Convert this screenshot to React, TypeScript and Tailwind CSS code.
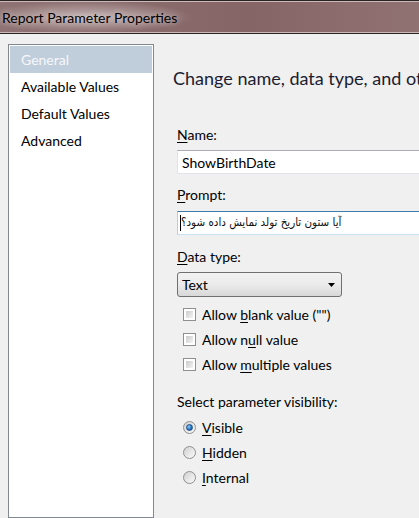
import React from "react";

const font = "font-['Lato',_'Noto_Sans',_sans-serif]";

// label with one underlined access key
function Accel({ pre = "", k, post }: { pre?: string; k: string; post: string }) {
  return (
    <span>
      {pre}
      <span className="underline underline-offset-2">{k}</span>
      {post}
    </span>
  );
}

function Checkbox({ children }: { children: React.ReactNode }) {
  return (
    <div className="flex h-[25px] items-center">
      <div className="ml-[6px] h-[13px] w-[13px] border border-[#8e8f8f] bg-white p-[2px]">
        <div className="h-full w-full bg-gradient-to-br from-[#cbcbcb] to-[#f4f4f4]" />
      </div>
      <span className="ml-[6px]">{children}</span>
    </div>
  );
}

function Radio({ checked, children }: { checked?: boolean; children: React.ReactNode }) {
  return (
    <div className="flex h-[25px] items-center">
      <div className="ml-[6px] flex h-[13px] w-[13px] items-center justify-center rounded-full border border-[#8e8f8f] bg-gradient-to-br from-[#d0d0d0] to-[#fbfbfb]">
        {checked && (
          <div className="h-[7px] w-[7px] rounded-full border border-[#1c4f87] bg-[radial-gradient(circle_at_35%_35%,#8fd0ff,#1f6fc0_60%,#0d4a8a)]" />
        )}
      </div>
      <span className="ml-[6px]">{children}</span>
    </div>
  );
}

export default function App() {
  return (
    <div className={`flex h-[518px] w-[419px] flex-col overflow-hidden bg-[#f0f0f0] text-[14px] text-black ${font}`}>
      {/* title bar */}
      <div className="h-[34px] shrink-0 border-y border-[#2b2222] bg-[#2b2222]">
        <div className="flex h-full items-center border-y border-[#c9b9b9] bg-[radial-gradient(ellipse_105px_16px_at_88px_50%,rgba(205,190,190,0.85),rgba(205,190,190,0)),linear-gradient(to_right,#8f7374,#866566_60%,#917273)] pl-[2px]">
          <span className="text-[14px] [text-shadow:0_0_6px_rgba(255,255,255,0.7)]">
            Report Parameter Properties
          </span>
        </div>
      </div>

      <div className="flex min-h-0 flex-1">
        {/* left page list */}
        <div className="ml-[8px] mt-[10px] w-[146px] shrink-0 border border-[#828790] bg-white p-[1px]">
          <div className="flex h-[27px] items-center bg-[#c0cddb] pl-[11px] text-[#f6f8fb]">General</div>
          <div className="flex h-[27px] items-center pl-[11px]">Available Values</div>
          <div className="flex h-[27px] items-center pl-[11px]">Default Values</div>
          <div className="flex h-[27px] items-center pl-[11px]">Advanced</div>
        </div>

        {/* general page */}
        <div className="ml-[19px] flex min-w-0 flex-1 flex-col">
          <div className="mt-[32px] overflow-hidden whitespace-nowrap text-[18px] leading-[24px] text-[#1c1c30]">
            Change name, data type, and other options.
          </div>

          <div className="flex flex-col pl-[4px]">
            <div className="mt-[35px] h-[20px] leading-[20px]">
              <Accel k="N" post="ame:" />
            </div>
            <div className="mt-[5px] flex h-[24px] w-[280px] items-center border border-[#e2e3ea] border-t-[#abadb3] bg-white pl-[4px]">
              ShowBirthDate
            </div>

            <div className="mt-[11px] h-[20px] leading-[20px]">
              <Accel k="P" post="rompt:" />
            </div>
            <div className="mt-[6px] flex h-[24px] w-[280px] items-center border border-[#b5cfe7] border-t-[#3d7bad] border-b-[#c7e2f1] bg-white pl-[2px]">
              <span className="h-[16px] w-px bg-black" />
              <span dir="rtl" className="font-['DejaVu_Sans_Condensed',_'DejaVu_Sans',_sans-serif] text-[11.5px] text-[#111]">
                آیا ستون تاریخ تولد نمایش داده شود؟
              </span>
            </div>

            <div className="mt-[12px] h-[20px] leading-[20px]">
              <Accel k="D" post="ata type:" />
            </div>
            <div className="mt-[5px] flex h-[25px] w-[165px] items-center justify-between rounded-[3px] border border-[#707070] bg-gradient-to-b from-[#f2f2f2] via-[#ebebeb] to-[#d8d8d8] pl-[4px] pr-[6px]">
              <span>Text</span>
              <svg width="7" height="4" viewBox="0 0 7 4">
                <path d="M0 0h7L3.5 4z" fill="#000" />
              </svg>
            </div>

            <div className="mt-[5px] flex flex-col">
              <Checkbox>
                Allow <Accel k="b" post={'lank value ("")'} />
              </Checkbox>
              <Checkbox>
                Allow n<Accel k="u" post="ll value" />
              </Checkbox>
              <Checkbox>
                Allow <Accel k="m" post="ultiple values" />
              </Checkbox>
            </div>

            <div className="mt-[15px] h-[20px] leading-[20px]">Select parameter visibility:</div>
            <div className="mt-[3px] flex flex-col">
              <Radio checked>
                <Accel k="V" post="isible" />
              </Radio>
              <Radio>
                <Accel k="H" post="idden" />
              </Radio>
              <Radio>
                <Accel k="I" post="nternal" />
              </Radio>
            </div>
          </div>
        </div>
      </div>
    </div>
  );
}
